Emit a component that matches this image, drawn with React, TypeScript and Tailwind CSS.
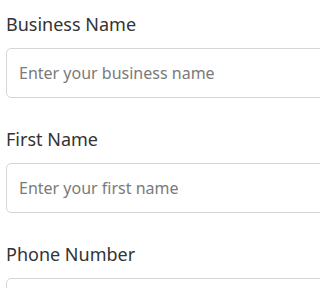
const fields = [
  { id: "business", label: "Business Name", placeholder: "Enter your business name" },
  { id: "first", label: "First Name", placeholder: "Enter your first name" },
  { id: "phone", label: "Phone Number", placeholder: "" },
];

function App() {
  return (
    <div className="w-full h-[288px] overflow-hidden bg-white font-['Noto_Sans',sans-serif]">
      <form className="flex flex-col pl-[6px] pt-[11px]">
        {fields.map((field) => (
          <div key={field.id} className="flex flex-col mb-[28px]">
            <label
              htmlFor={field.id}
              className="text-[18px] leading-[27px] text-[#333333] mb-[10px]"
            >
              {field.label}
            </label>
            <input
              id={field.id}
              type="text"
              placeholder={field.placeholder}
              className="w-[400px] h-[50px] shrink-0 border border-[#d6d6d6] rounded-[5px] px-[12px] text-[16px] text-[#333333] placeholder:text-[#7a7a7a] outline-none"
            />
          </div>
        ))}
      </form>
    </div>
  );
}

export default App;
